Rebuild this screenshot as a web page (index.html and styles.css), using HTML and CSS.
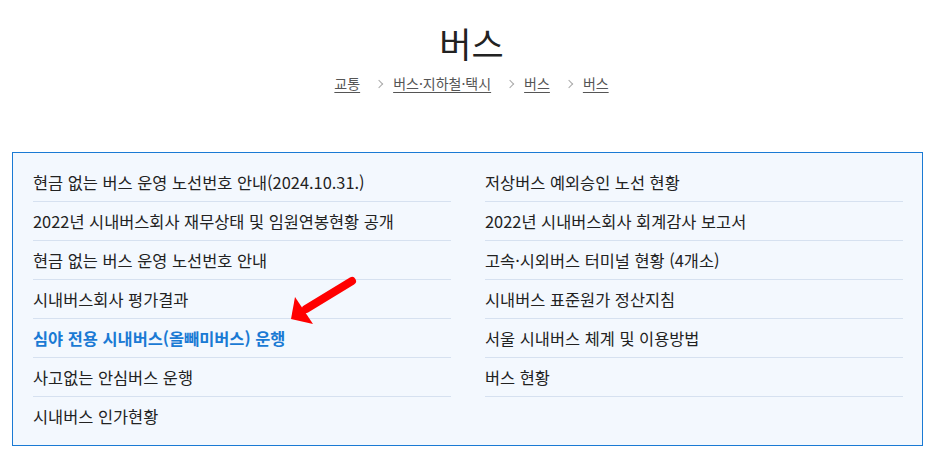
FILE: index.html
```html
<!DOCTYPE html>
<html lang="ko">
<head>
  <meta charset="UTF-8" />
  <title>버스</title>
  <link rel="stylesheet" href="styles.css">
</head>
<body>

  <!-- Page title + breadcrumb -->
  <div class="page-head">
    <h1>버스</h1>
    <div class="crumbs">
      <a href="#">교통</a><span class="sep"></span><a href="#">버스·지하철·택시</a><span class="sep"></span><a href="#">버스</a><span class="sep"></span><a href="#">버스</a>
    </div>
  </div>

  <!-- Sub menu box -->
  <div class="menu-box">
    <ul class="menu-list">
      <li><a href="#">현금 없는 버스 운영 노선번호 안내(2024.10.31.)</a></li>
      <li><a href="#">2022년 시내버스회사 재무상태 및 임원연봉현황 공개</a></li>
      <li><a href="#">현금 없는 버스 운영 노선번호 안내</a></li>
      <li><a href="#">시내버스회사 평가결과</a></li>
      <li class="on"><a href="#">심야 전용 시내버스(올빼미버스) 운행</a></li>
      <li><a href="#">사고없는 안심버스 운행</a></li>
      <li class="last"><a href="#">시내버스 인가현황</a></li>
    </ul>
    <ul class="menu-list">
      <li><a href="#">저상버스 예외승인 노선 현황</a></li>
      <li><a href="#">2022년 시내버스회사 회계감사 보고서</a></li>
      <li><a href="#">고속·시외버스 터미널 현황 (4개소)</a></li>
      <li><a href="#">시내버스 표준원가 정산지침</a></li>
      <li><a href="#">서울 시내버스 체계 및 이용방법</a></li>
      <li><a href="#">버스 현황</a></li>
    </ul>

    <!-- red pointer arrow -->
    <svg class="pointer" width="90" height="60" viewBox="0 0 90 60">
      <line x1="82" y1="12" x2="36" y2="40" stroke="#f00" stroke-width="8" stroke-linecap="round"/>
      <polygon points="21,50 25,28 43,55" fill="#f00"/>
    </svg>
  </div>

</body>
</html>
```

FILE: styles.css
```css
body {
  margin: 0;
  font-family: "Noto Sans CJK KR", "Noto Sans", sans-serif;
  color: #222;
  background-color: #fff;
}

a {
  color: inherit;
  text-decoration: none;
}

/* Title area */
.page-head {
  text-align: center;
  padding-top: 19px;
}

.page-head h1 {
  margin: 0;
  font-size: 35px;
  font-weight: 400;
  line-height: 48px;
  color: #222;
}

.crumbs {
  margin-top: 6px;
  font-size: 14px;
  line-height: 20px;
  color: #555;
}

.crumbs a {
  text-decoration: underline;
  text-underline-offset: 3px;
}

.crumbs .sep {
  display: inline-block;
  width: 5px;
  height: 5px;
  margin: 0 11px 2px 16px;
  border-top: 1px solid #aaa;
  border-right: 1px solid #aaa;
  transform: rotate(45deg);
}

/* Link box */
.menu-box {
  position: relative;
  display: flex;
  gap: 34px;
  margin: 59px 20px 0 12px;
  padding: 10px 19px 10px 20px;
  border: 1px solid #1a7ad4;
  background-color: #f3f8fe;
}

.menu-list {
  flex: 1;
  list-style: none;
  margin: 0;
  padding: 0;
}

.menu-list li {
  height: 38px;
  border-bottom: 1px solid #d6e1f0;
  font-size: 16.4px;
  line-height: 38px;
  white-space: nowrap;
}

.menu-list li.last {
  border-bottom: none;
}

.menu-list li.on {
  color: #1a7ad4;
  font-weight: 600;
}

.pointer {
  position: absolute;
  left: 257px;
  top: 116px;
}
```
